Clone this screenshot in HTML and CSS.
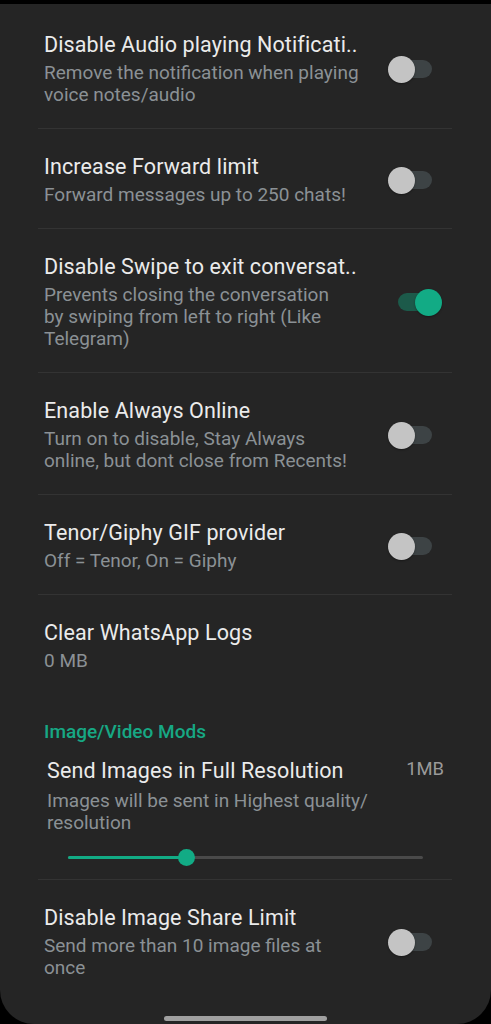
FILE: index.html
```html
<!DOCTYPE html>
<html>
<head>
<meta charset="utf-8">
<link rel="stylesheet" href="styles.css">
</head>
<body>
<div class="screen">
  <div class="list">
    <div class="row first">
      <div class="text">
        <div class="title">Disable Audio playing Notificati..</div>
        <div class="sub">Remove the notification when playing<br>voice notes/audio</div>
      </div>
      <div class="switch"><span class="track"></span><span class="thumb"></span></div>
    </div>
    <div class="row">
      <div class="text">
        <div class="title">Increase Forward limit</div>
        <div class="sub">Forward messages up to 250 chats!</div>
      </div>
      <div class="switch"><span class="track"></span><span class="thumb"></span></div>
    </div>
    <div class="row">
      <div class="text">
        <div class="title">Disable Swipe to exit conversat..</div>
        <div class="sub">Prevents closing the conversation<br>by swiping from left to right (Like<br>Telegram)</div>
      </div>
      <div class="switch on"><span class="track"></span><span class="thumb"></span></div>
    </div>
    <div class="row">
      <div class="text">
        <div class="title">Enable Always Online</div>
        <div class="sub">Turn on to disable, Stay Always<br>online, but dont close from Recents!</div>
      </div>
      <div class="switch"><span class="track"></span><span class="thumb"></span></div>
    </div>
    <div class="row">
      <div class="text">
        <div class="title">Tenor/Giphy GIF provider</div>
        <div class="sub">Off = Tenor, On = Giphy</div>
      </div>
      <div class="switch"><span class="track"></span><span class="thumb"></span></div>
    </div>
    <div class="row plain">
      <div class="text">
        <div class="title">Clear WhatsApp Logs</div>
        <div class="sub">0 MB</div>
      </div>
    </div>
    <div class="category">Image/Video Mods</div>
    <div class="seekrow">
      <div class="seekhead">
        <div class="text">
          <div class="title">Send Images in Full Resolution</div>
          <div class="sub seeksub">Images will be sent in Highest quality/<br>resolution</div>
        </div>
        <div class="value">1MB</div>
      </div>
      <div class="slider">
        <div class="slider-track">
          <div class="slider-fill" style="width: 33.3%"></div>
          <div class="slider-thumb" style="left: 33.3%"></div>
        </div>
      </div>
    </div>
    <div class="row last">
      <div class="text">
        <div class="title">Disable Image Share Limit</div>
        <div class="sub">Send more than 10 image files at<br>once</div>
      </div>
      <div class="switch"><span class="track"></span><span class="thumb"></span></div>
    </div>
  </div>
  <div class="home-indicator"></div>
</div>
</body>
</html>
```
FILE: styles.css
```css
html, body {
  margin: 0;
  padding: 0;
  background: #000;
}
body {
  font-family: Roboto, "Noto Sans", sans-serif;
  width: 491px;
  height: 1024px;
  overflow: hidden;
}
.screen {
  position: relative;
  margin-top: 4px;
  height: 1020px;
  background: #252525;
  border-radius: 0 0 34px 34px;
  overflow: hidden;
}
.list {
  margin: 3px 39px 0 38px;
}
.row {
  display: flex;
  align-items: center;
  padding: 25px 10px 22px 6px;
  border-bottom: 1px solid #333333;
}
.row.plain {
  border-bottom: none;
}
.row.last {
  border-bottom: none;
}
.text {
  flex: 1;
  min-width: 0;
}
.title {
  font-size: 21.5px;
  line-height: 26px;
  letter-spacing: 0.12px;
  color: #ebebeb;
  white-space: nowrap;
}
.sub {
  margin-top: 4px;
  font-size: 19px;
  line-height: 22px;
  color: #8b9195;
  white-space: nowrap;
}
.switch {
  position: relative;
  width: 54px;
  height: 27px;
  flex: none;
}
.track {
  position: absolute;
  left: 10px;
  right: 10px;
  top: 4.5px;
  height: 18px;
  border-radius: 9px;
  background: #3d4345;
}
.thumb {
  position: absolute;
  left: 0;
  top: 0;
  width: 27px;
  height: 27px;
  border-radius: 50%;
  background: #c4c4c4;
  box-shadow: 0 1px 2px rgba(0,0,0,0.35);
}
.switch.on .track {
  background: #1c5a4a;
}
.switch.on .thumb {
  left: auto;
  right: 0;
  background: #12ab85;
}
.category {
  padding: 27px 0 0 6px;
  font-size: 19px;
  line-height: 22px;
  font-weight: 500;
  color: #17a884;
}
.seekrow {
  padding: 15px 8px 12px 9px;
  border-bottom: 1px solid #333333;
}
.seekhead {
  display: flex;
  align-items: flex-start;
}
.seeksub {
  margin-top: 6px;
}
.value {
  font-size: 18.4px;
  line-height: 22px;
  color: #9a9a9a;
}
.slider {
  height: 20px;
  margin: 13px 21px 0 21px;
  display: flex;
  align-items: center;
}
.slider-track {
  position: relative;
  flex: 1;
  height: 3px;
  border-radius: 2px;
  background: #4a4a4a;
}
.slider-fill {
  height: 3px;
  border-radius: 2px;
  background: #12ab85;
}
.slider-thumb {
  position: absolute;
  top: 50%;
  width: 17px;
  height: 17px;
  margin: -8.5px 0 0 -8.5px;
  border-radius: 50%;
  background: #12ab85;
}
.home-indicator {
  position: absolute;
  left: 164px;
  bottom: 3px;
  width: 163px;
  height: 5px;
  border-radius: 3px;
  background: #a0a0a0;
}
```
